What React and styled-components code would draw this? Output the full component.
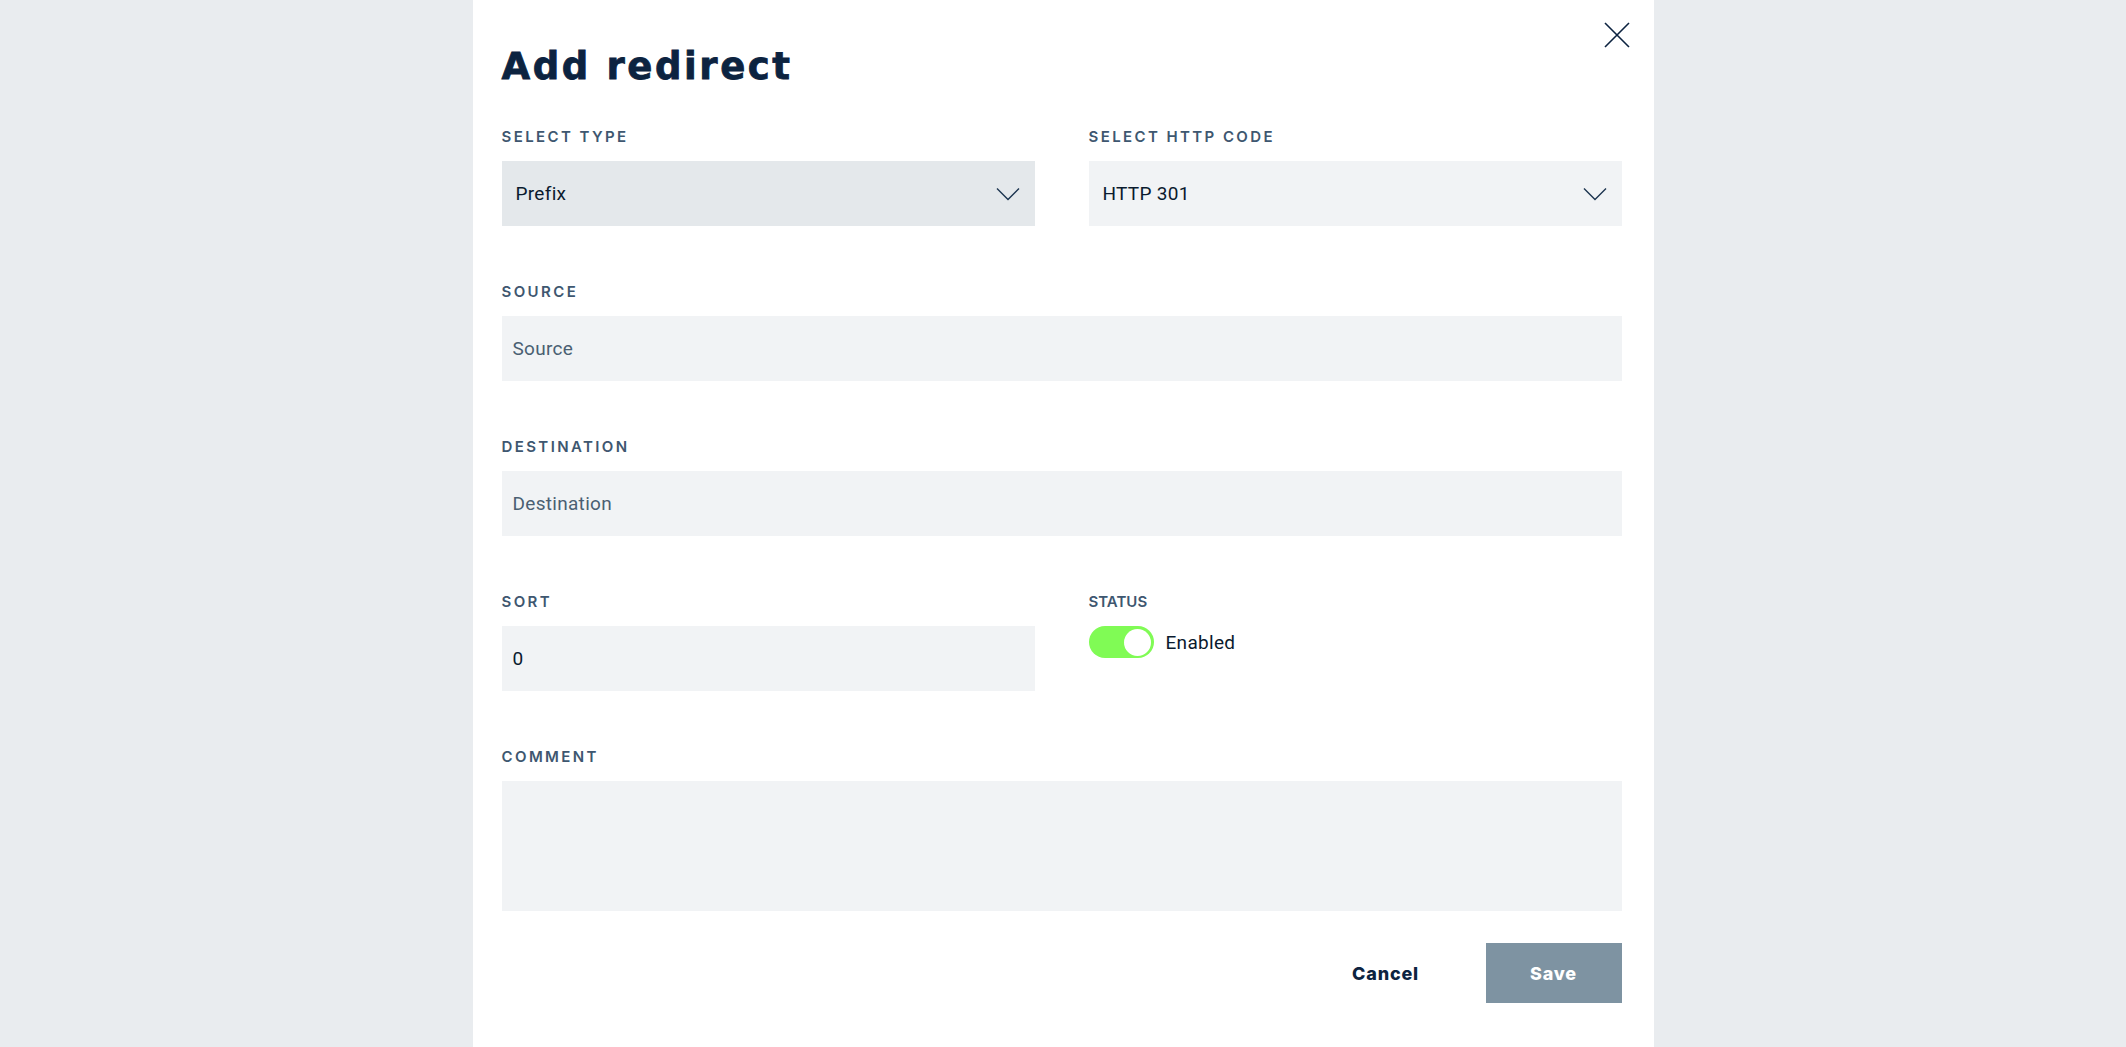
import React, { useState } from "react";
import styled, { createGlobalStyle } from "styled-components";

const GlobalStyle = createGlobalStyle`
  html, body {
    margin: 0;
    padding: 0;
    background: #e9ecef;
  }
  * {
    box-sizing: border-box;
  }
`;

const Page = styled.div`
  display: flex;
  justify-content: center;
  min-height: 1047px;
`;

const Modal = styled.div`
  width: 1181px;
  min-height: 1047px;
  background: #ffffff;
  padding: 22px 32px 0 29px;
`;

const Header = styled.div`
  display: flex;
  justify-content: space-between;
  align-items: flex-start;
`;

const Title = styled.h1`
  margin: 22px 0 0;
  font-family: "DejaVu Sans", Inter, sans-serif;
  font-weight: 700;
  font-size: 37px;
  line-height: 45px;
  letter-spacing: 2.6px;
  -webkit-text-stroke: 0.8px #0c2340;
  color: #0c2340;
`;

const CloseButton = styled.button`
  display: flex;
  padding: 0;
  margin-right: -8px;
  border: none;
  background: none;
  cursor: pointer;
  color: #0c2340;
`;

const Form = styled.div`
  display: grid;
  grid-template-columns: 1fr 1fr;
  column-gap: 54px;
  row-gap: 57px;
  margin-top: 39px;
`;

const Field = styled.div`
  display: flex;
  flex-direction: column;
  gap: 15px;
  grid-column: ${(p) => (p.$wide ? "1 / -1" : "auto")};
`;

const Label = styled.label`
  font-family: Inter, "Liberation Sans", sans-serif;
  font-weight: 600;
  font-size: 15px;
  line-height: 18px;
  letter-spacing: ${(p) => (p.$plain ? "0" : "2.4px")};
  text-transform: uppercase;
  color: #3e5770;
`;

const SelectBox = styled.div`
  display: flex;
  align-items: center;
  justify-content: space-between;
  height: 65px;
  padding: 0 15px 0 14px;
  background: ${(p) => (p.$active ? "#e4e8eb" : "#f1f3f5")};
  font-family: Roboto, "Liberation Sans", sans-serif;
  font-size: 19px;
  letter-spacing: 0.3px;
  color: #0a1a2e;
  cursor: pointer;
`;

const TextInput = styled.input`
  height: 65px;
  width: 100%;
  padding: 0 11px;
  border: none;
  outline: none;
  background: #f1f3f5;
  font-family: Roboto, "Liberation Sans", sans-serif;
  font-size: 19px;
  letter-spacing: 0.3px;
  color: #0a1a2e;

  &::placeholder {
    color: #4a5f72;
  }
`;

const TextArea = styled.textarea`
  height: 130px;
  width: 100%;
  padding: 12px 11px;
  border: none;
  outline: none;
  resize: none;
  background: #f1f3f5;
  font-family: Roboto, "Liberation Sans", sans-serif;
  font-size: 19px;
  color: #0a1a2e;
`;

const ToggleRow = styled.div`
  display: flex;
  align-items: center;
  gap: 12px;
`;

const Toggle = styled.button`
  display: flex;
  align-items: center;
  justify-content: ${(p) => (p.$on ? "flex-end" : "flex-start")};
  width: 65px;
  height: 32px;
  padding: 0 3px;
  border: none;
  border-radius: 16px;
  background: ${(p) => (p.$on ? "#80fb55" : "#c9d1d8")};
  cursor: pointer;
`;

const Knob = styled.span`
  width: 27px;
  height: 27px;
  border-radius: 50%;
  background: #ffffff;
`;

const ToggleText = styled.span`
  font-family: Roboto, "Liberation Sans", sans-serif;
  font-size: 19px;
  letter-spacing: 0.3px;
  color: #0a1a2e;
`;

const Actions = styled.div`
  display: flex;
  justify-content: flex-end;
  gap: 32px;
  margin-top: 32px;
`;

const ActionButton = styled.button`
  width: 136px;
  height: 60px;
  border: none;
  font-family: Inter, "Liberation Sans", sans-serif;
  font-weight: 800;
  font-size: 18px;
  letter-spacing: 0.8px;
  cursor: pointer;
  background: ${(p) => (p.$primary ? "#7e93a2" : "transparent")};
  color: ${(p) => (p.$primary ? "#ffffff" : "#0c2340")};
`;

const Chevron = () => (
  <svg width="24" height="14" viewBox="0 0 24 14" fill="none">
    <path d="M1 1.5 L12 12.5 L23 1.5" stroke="#1d3550" strokeWidth="1.4" />
  </svg>
);

const CloseIcon = () => (
  <svg width="26" height="26" viewBox="0 0 26 26" fill="none">
    <path d="M1 1 L25 25 M25 1 L1 25" stroke="currentColor" strokeWidth="1.6" />
  </svg>
);

export default function App() {
  const [enabled, setEnabled] = useState(true);

  return (
    <>
      <GlobalStyle />
      <Page>
        <Modal>
          <Header>
            <Title>Add redirect</Title>
            <CloseButton aria-label="Close">
              <CloseIcon />
            </CloseButton>
          </Header>

          <Form>
            <Field>
              <Label>Select type</Label>
              <SelectBox $active>
                <span>Prefix</span>
                <Chevron />
              </SelectBox>
            </Field>
            <Field>
              <Label>Select HTTP code</Label>
              <SelectBox>
                <span>HTTP 301</span>
                <Chevron />
              </SelectBox>
            </Field>

            <Field $wide>
              <Label>Source</Label>
              <TextInput placeholder="Source" />
            </Field>

            <Field $wide>
              <Label>Destination</Label>
              <TextInput placeholder="Destination" />
            </Field>

            <Field>
              <Label>Sort</Label>
              <TextInput defaultValue="0" />
            </Field>
            <Field>
              <Label $plain>Status</Label>
              <ToggleRow>
                <Toggle $on={enabled} onClick={() => setEnabled(!enabled)}>
                  <Knob />
                </Toggle>
                <ToggleText>{enabled ? "Enabled" : "Disabled"}</ToggleText>
              </ToggleRow>
            </Field>

            <Field $wide>
              <Label>Comment</Label>
              <TextArea />
            </Field>
          </Form>

          <Actions>
            <ActionButton>Cancel</ActionButton>
            <ActionButton $primary>Save</ActionButton>
          </Actions>
        </Modal>
      </Page>
    </>
  );
}
